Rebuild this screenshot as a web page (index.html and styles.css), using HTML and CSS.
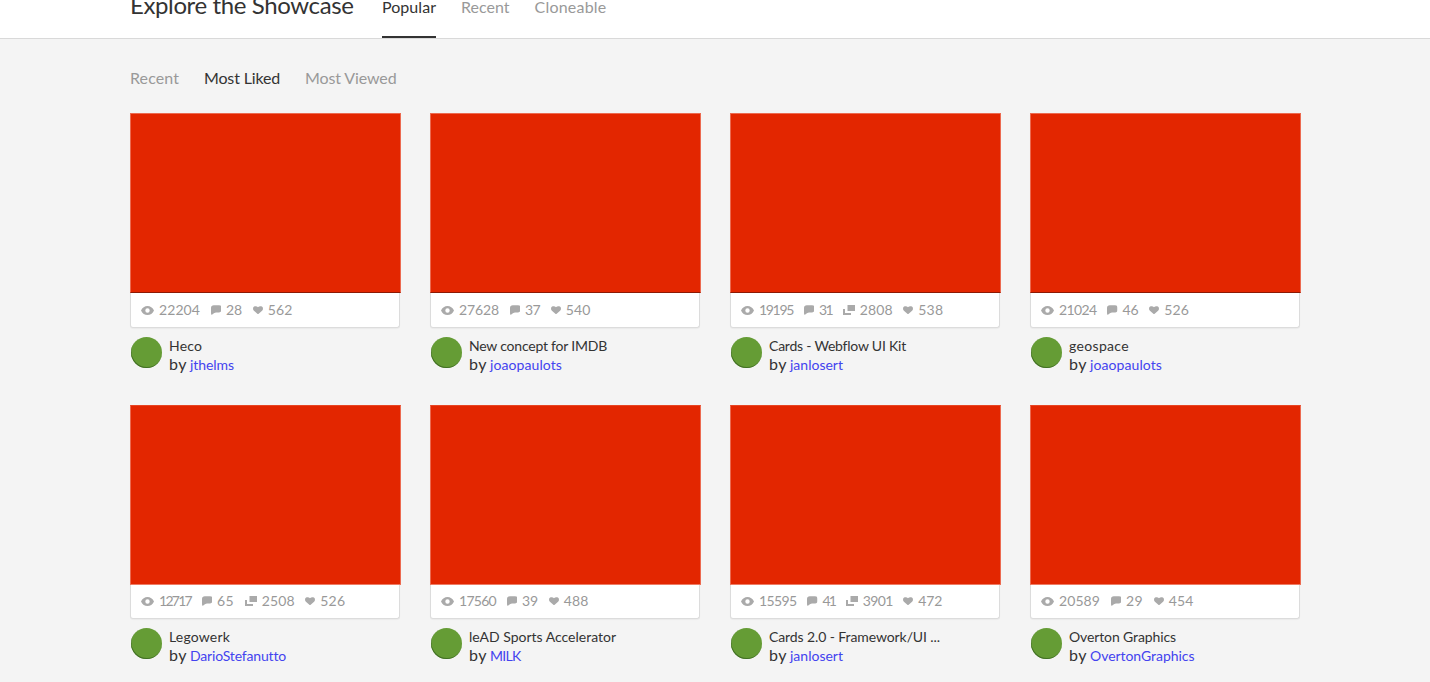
FILE: index.html
```html
<!DOCTYPE html>
<html lang="en">
<head>
<meta charset="utf-8">
<title>Explore the Showcase</title>
<link rel="stylesheet" href="styles.css">
</head>
<body>
<svg class="sprite" aria-hidden="true">
  <symbol id="eye" viewBox="0 0 13 9"><path fill-rule="evenodd" d="M0 4.500C1.300 1.500 3.800 0 6.500 0S11.700 1.500 13 4.500C11.700 7.500 9.200 9 6.500 9S1.300 7.500 0 4.500ZM6.500 2.300a2.200 2.200 0 1 0 0 4.400a2.200 2.200 0 0 0 0-4.400Z"/></symbol>
  <symbol id="comment" viewBox="0 0 11 10"><path d="M3 0H8.500Q11 0 11 2.300V4.700Q11 7.500 8.500 7.500H5.200Q3.400 7.800 2.300 9Q1.500 10 .3 10Q0 9 0 7.500V3Q0 0 3 0Z"/></symbol>
  <symbol id="clone" viewBox="0 0 12 10"><path d="M4.500 0H12V6H4.500ZM0 4H2V8H8V10H0Z"/></symbol>
  <symbol id="heart" viewBox="0 0 11 9"><path d="M5.500 9L1 5C-.5 3.500-.2 1.400 1.200.5C2.700-.4 4.500-.1 5.500 1.300C6.500-.1 8.300-.4 9.800.5C11.200 1.400 11.500 3.500 10 5Z"/></symbol>
</svg>
<header class="topbar">
  <div class="wrap topbar-row">
    <h1 class="heading" data-width="223.500">Explore the Showcase</h1>
    <nav class="tabs">
      <a class="tab active" data-width="54">Popular</a>
      <a class="tab" data-width="48.500">Recent</a>
      <a class="tab" data-width="72">Cloneable</a>
    </nav>
  </div>
</header>
<main class="wrap">
  <nav class="filters">
    <a class="filter" data-width="49">Recent</a>
    <a class="filter active" data-width="76">Most Liked</a>
    <a class="filter" data-width="91.500">Most Viewed</a>
  </nav>
  <section class="grid" id="grid"></section>
</main>
<script src="app.js"></script>
</body>
</html>
```
FILE: styles.css
```css
* { box-sizing: border-box; }
body { margin: 0; height: 682px; overflow: hidden; background: #f4f4f4; color: #333; font: 16px/20px Lato, "Open Sans", sans-serif; }
.sprite { display: none; }
.wrap { width: 1170px; margin: 0 auto; }
.topbar { height: 39px; background: #fff; border-bottom: 1px solid #d9d9d9; }
.topbar-row { display: flex; gap: 28px; height: 38px; }
.heading { width: 224px; margin: -10px 0 0; font-size: 24px; line-height: 30px; font-weight: 400; }
.tabs { display: flex; gap: 25px; }
.tab { display: block; height: 38px; color: #999; line-height: 13px; }
.tab.active { color: #333; border-bottom: 2px solid #333; }
.filters { display: flex; gap: 25px; padding: 29px 0 0; height: 74px; }
.filter { color: #999; }
.filter.active { color: #333; }
.grid { display: grid; grid-template-columns: repeat(4, 270px); column-gap: 30px; row-gap: 30px; }
.card { background: #fff; border: 1px solid #dcdcdc; border-top: 0; border-radius: 0 0 3px 3px; box-shadow: 0 1px 1px rgba(0,0,0,.04); }
.thumb { height: 180px; margin: 0 -2px 0 -1px; background: #e32600; border: 1px solid #ec6a50; border-top-color: #e74523; border-bottom-color: #ee7c65; }
.thumb.edged { margin-bottom: 1px; border-bottom-color: #8c1a05; border-top-color: #ec6a50; }
.stats { display: flex; height: 33px; padding: 6px 0 0 10px; font-size: 14px; line-height: 20px; color: #999; }
.stat { display: flex; align-items: center; height: 20px; margin-right: 10.600px; }
.stat svg { fill: #aaa; margin-right: 5px; }
.eye { width: 13px; height: 9px; }
.comment { width: 10.500px; height: 10px; }
.clone { width: 12px; height: 10px; }
.heart { width: 10px; height: 8.500px; }
.byline { display: flex; height: 47px; padding: 9px 0 0 1px; }
.avatar { width: 31px; height: 31px; margin-right: 7px; border-radius: 50%; background: #659c35; box-shadow: inset .5px -1px 0 #416f25; }
.title { margin-top: -1px; font-size: 14px; line-height: 19px; color: #333; }
.author { margin-top: -1px; line-height: 19px; }
.author a { font-size: 14px; color: #4343ef; margin-left: 3px; }
[data-width] { white-space: nowrap; }
```
FILE: app.js
```js
const sites = [
  { title: ["Heco", 33], author: ["jthelms", 44], stats: { eye: ["22204", 41], comment: ["28", 16], heart: ["562", 25] }, edged: true },
  { title: ["New concept for IMDB", 138], author: ["joaopaulots", 72], stats: { eye: ["27628", 40], comment: ["37", 15], heart: ["540", 25] }, edged: true },
  { title: ["Cards - Webflow UI Kit", 137], author: ["janlosert", 53], stats: { eye: ["19195", 34], comment: ["31", 13], clone: ["2808", 33], heart: ["538", 25] }, edged: true },
  { title: ["geospace", 60], author: ["joaopaulots", 72], stats: { eye: ["21024", 37.5], comment: ["46", 16], heart: ["526", 25] }, edged: true },
  { title: ["Legowerk", 61], author: ["DarioStefanutto", 95.5], stats: { eye: ["12717", 32], comment: ["65", 17], clone: ["2508", 33], heart: ["526", 25] } },
  { title: ["leAD Sports Accelerator", 147], author: ["MILK", 30.5], stats: { eye: ["17560", 37], comment: ["39", 16], heart: ["488", 25] } },
  { title: ["Cards 2.0 - Framework/UI ...", 171], author: ["janlosert", 53], stats: { eye: ["15595", 37.5], comment: ["41", 12.5], clone: ["3901", 30], heart: ["472", 24] } },
  { title: ["Overton Graphics", 107], author: ["OvertonGraphics", 104.5], stats: { eye: ["20589", 41], comment: ["29", 17], heart: ["454", 25] } }
];

document.getElementById("grid").innerHTML = sites.map(s => `
  <article class="item">
    <div class="card">
      <div class="thumb${s.edged ? " edged" : ""}"></div>
      <div class="stats">${Object.entries(s.stats).map(([icon, [n, w]]) => `<span class="stat"><svg class="${icon}"><use href="#${icon}"/></svg><span data-width="${w}">${n}</span></span>`).join("")}</div>
    </div>
    <div class="byline">
      <div class="avatar"></div>
      <div>
        <div class="title"><span data-width="${s.title[1]}">${s.title[0]}</span></div>
        <div class="author"><span data-width="18">by</span><a data-width="${s.author[1]}">${s.author[0]}</a></div>
      </div>
    </div>
  </article>`).join("");

document.querySelectorAll("[data-width]").forEach(el => {
  const range = document.createRange();
  range.selectNodeContents(el);
  const natural = range.getBoundingClientRect().width;
  el.style.letterSpacing = (el.dataset.width - natural) / el.textContent.length + "px";
});
```
